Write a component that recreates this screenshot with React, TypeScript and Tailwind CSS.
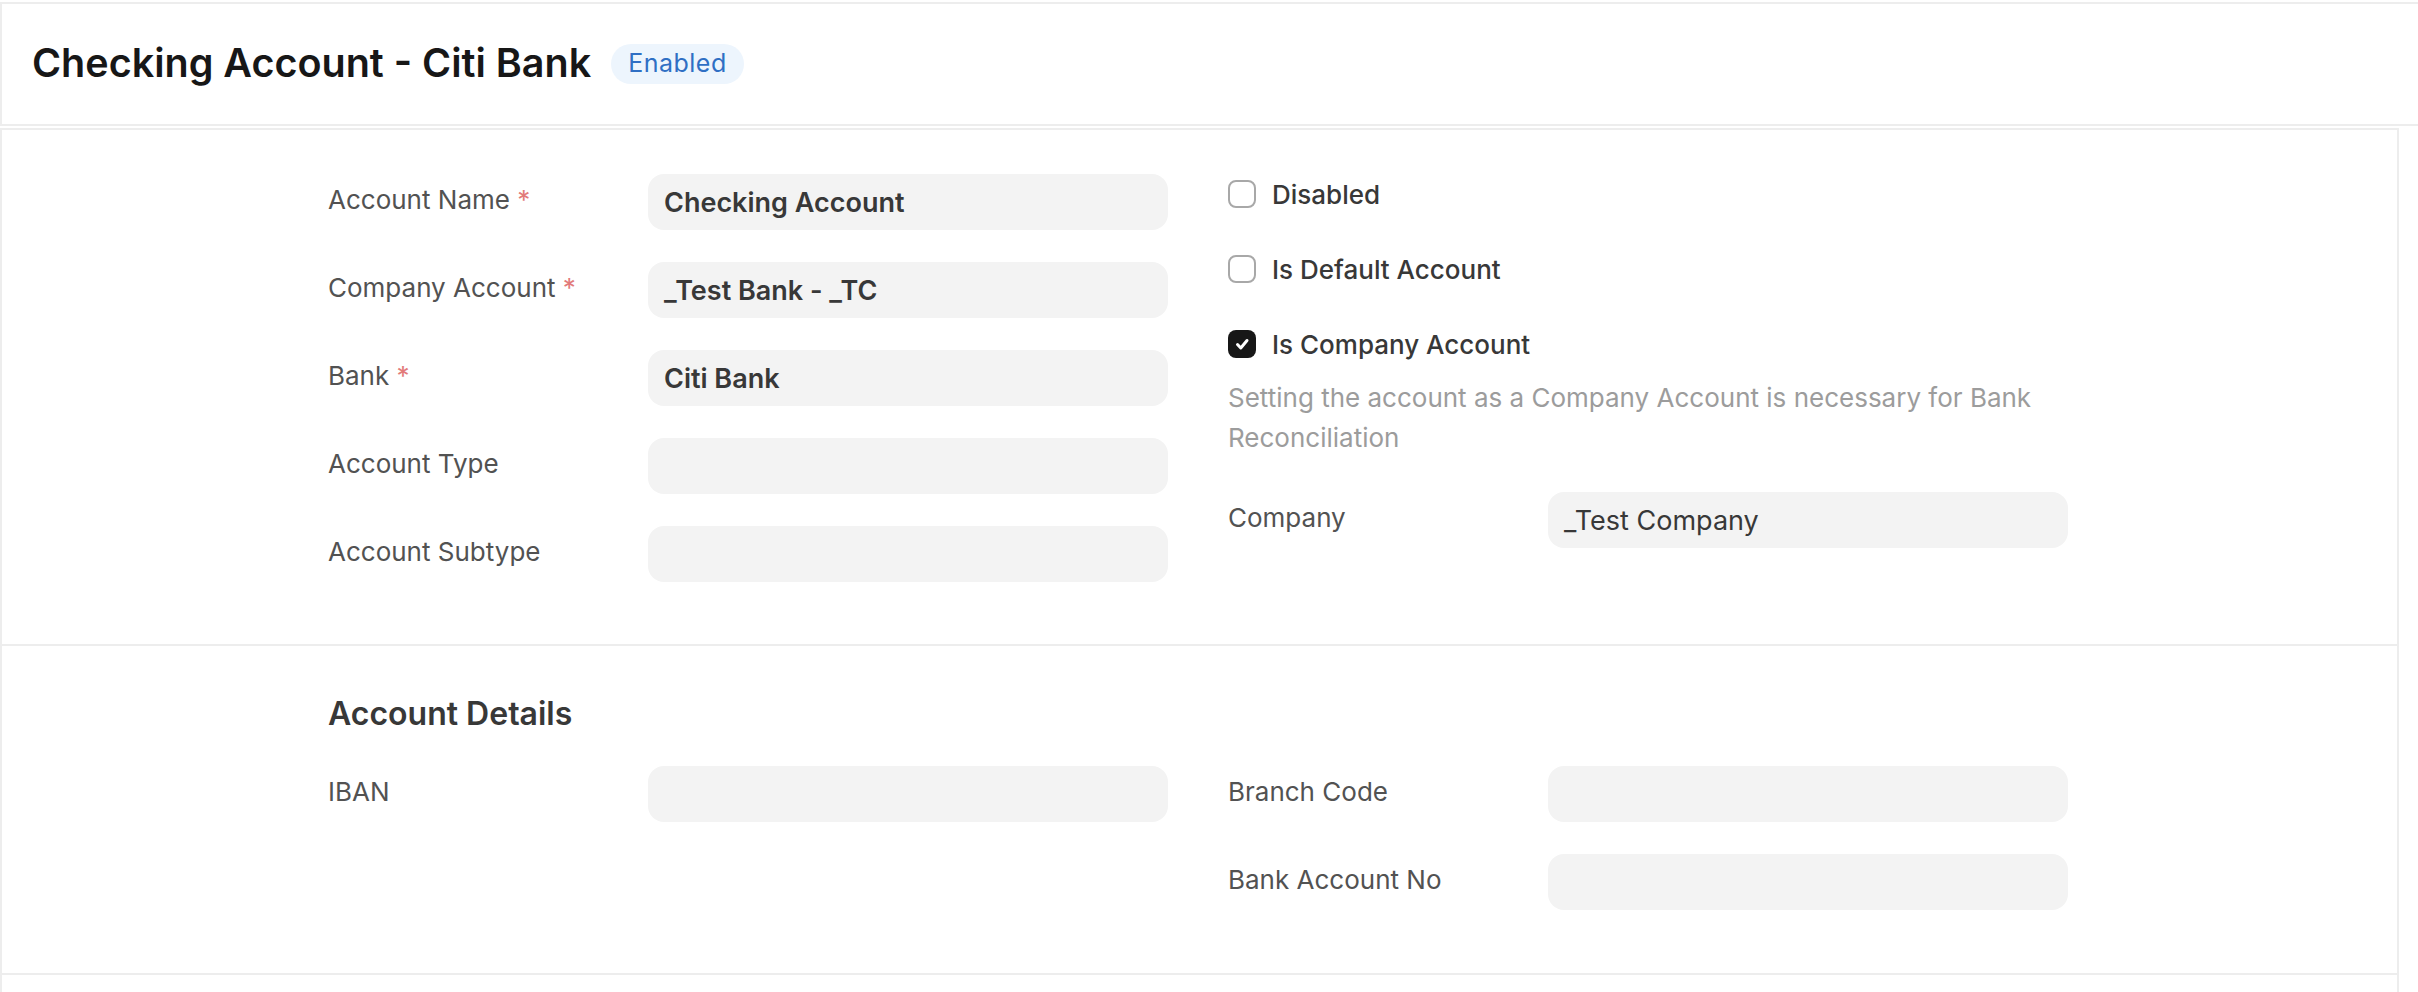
// Bank Account form – header, main section, account details

const FONT = "font-['Inter','Noto_Sans',sans-serif]";

type FieldProps = {
    label: string;
    required?: boolean;
    value?: string;
    strong?: boolean;
};

function Field({ label, required, value, strong }: FieldProps) {
    return (
        <div className="flex">
            <div className="w-[320px] text-[26px] leading-[52px] text-[#525252]">
                {label}
                {required && <span className="text-[#e27a7a]"> *</span>}
            </div>
            <div
                className={`flex h-[56px] w-[520px] items-center rounded-2xl bg-[#f3f3f3] px-4 pt-[2px] text-[27px] text-[#383838] ${strong ? 'font-semibold' : ''}`}
            >
                {value}
            </div>
        </div>
    );
}

function Checkbox({ label, checked }: { label: string; checked?: boolean }) {
    return (
        <div className="flex h-[40px] items-center gap-4">
            {checked ? (
                <span className="flex h-[28px] w-[28px] items-center justify-center rounded-[8px] bg-[#171717]">
                    <svg width="28" height="28" viewBox="0 0 28 28" fill="none">
                        <path d="M9.5 14.5L12.8 18L19 10.5" stroke="white" strokeWidth="3" strokeLinecap="round" strokeLinejoin="round" />
                    </svg>
                </span>
            ) : (
                <span className="h-[28px] w-[28px] rounded-[8px] border-2 border-[#a8a8a8] bg-white" />
            )}
            <span className="text-[26px] font-medium text-[#383838]">{label}</span>
        </div>
    );
}

export default function App() {
    return (
        <div className={`min-h-screen bg-white ${FONT}`}>
            {/* 헤더 */}
            <div className="h-[2px]" />
            <header className="flex h-[124px] items-center gap-5 border-y-2 border-l-2 border-[#ededed] pl-[30px]">
                <h1 className="text-[39.5px] font-semibold text-[#171717]">Checking Account - Citi Bank</h1>
                <span className="flex h-[40px] items-center rounded-full bg-[#edf5fd] px-[17px] text-[25px] tracking-[0.02em] text-[#2f6fc4]">
                    Enabled
                </span>
            </header>

            {/* 폼 카드 */}
            <div className="mt-[2px] mr-[19px] border-x-2 border-t-2 border-[#ededed]">
                <section className="border-b-2 border-[#ededed] pt-[44px] pb-[62px] pl-[326px]">
                    <div className="grid grid-cols-[840px_840px] gap-x-[60px]">
                        <div className="flex flex-col gap-[32px]">
                            <Field label="Account Name" required value="Checking Account" strong />
                            <Field label="Company Account" required value="_Test Bank - _TC" strong />
                            <Field label="Bank" required value="Citi Bank" strong />
                            <Field label="Account Type" />
                            <Field label="Account Subtype" />
                        </div>
                        <div className="flex flex-col">
                            <div className="flex flex-col gap-[35px]">
                                <Checkbox label="Disabled" />
                                <Checkbox label="Is Default Account" />
                                <Checkbox label="Is Company Account" checked />
                            </div>
                            <p className="mt-[14px] text-[26px] leading-[40px] text-[#9c9c9c]">
                                Setting the account as a Company Account is necessary for Bank Reconciliation
                            </p>
                            <div className="mt-[34px]">
                                <Field label="Company" value="_Test Company" />
                            </div>
                        </div>
                    </div>
                </section>

                <section className="border-b-2 border-[#ededed] pt-[47px] pb-[63px] pl-[326px]">
                    <h2 className="text-[32px] leading-[42px] font-semibold text-[#383838]">Account Details</h2>
                    <div className="mt-[31px] grid grid-cols-[840px_840px] gap-x-[60px]">
                        <div className="flex flex-col gap-[32px]">
                            <Field label="IBAN" />
                        </div>
                        <div className="flex flex-col gap-[32px]">
                            <Field label="Branch Code" />
                            <Field label="Bank Account No" />
                        </div>
                    </div>
                </section>

                <div className="h-[60px]" />
            </div>
        </div>
    );
}
